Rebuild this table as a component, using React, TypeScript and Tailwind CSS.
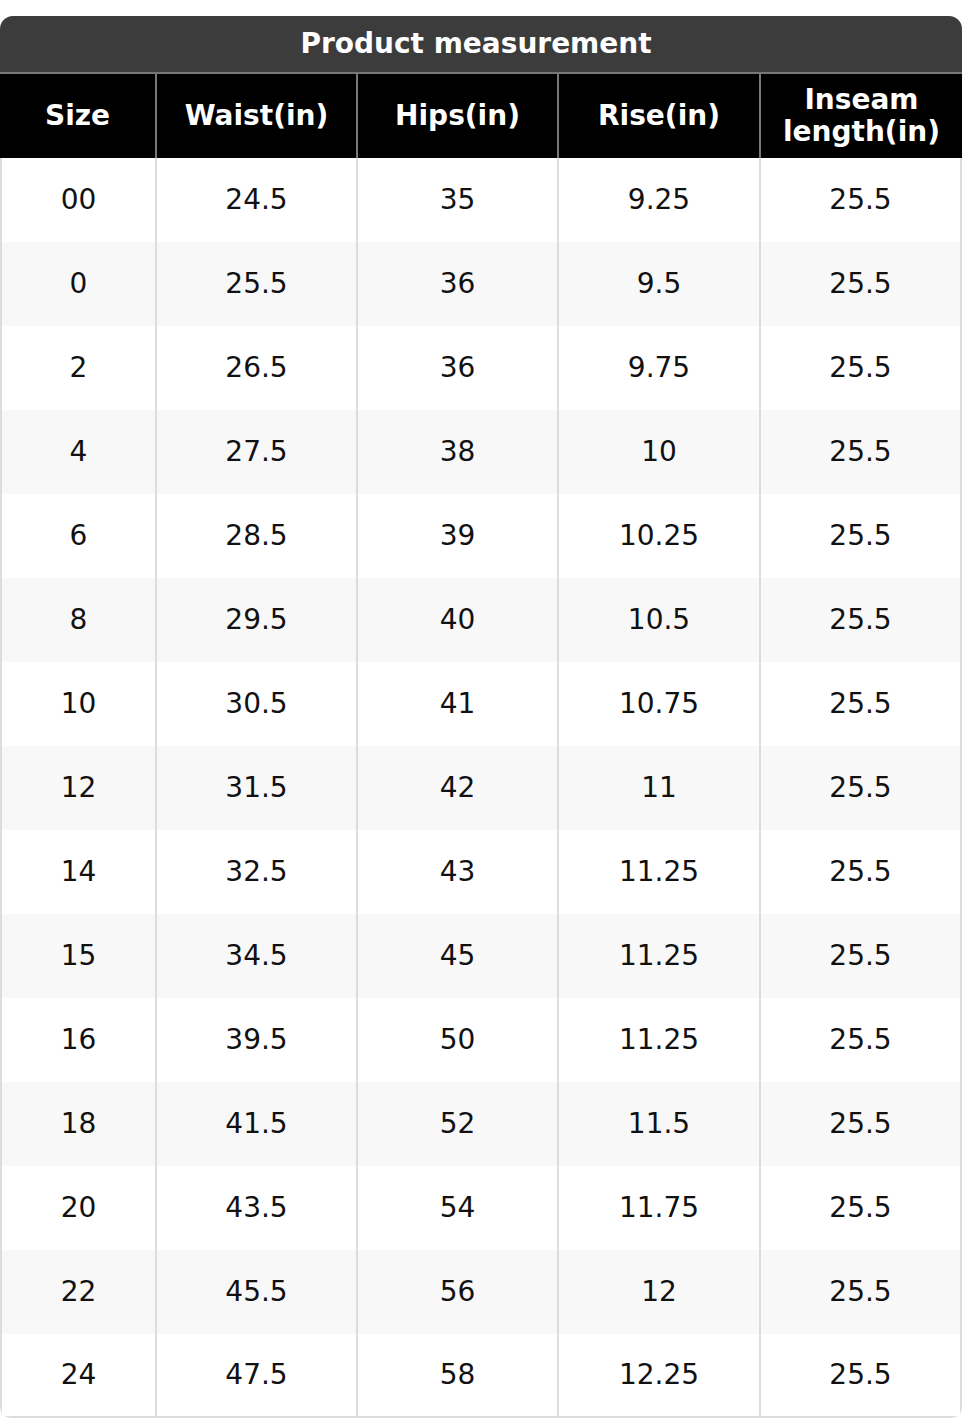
const columns = ["Size", "Waist(in)", "Hips(in)", "Rise(in)", "Inseam length(in)"];

const rows = [
  ["00", "24.5", "35", "9.25", "25.5"],
  ["0", "25.5", "36", "9.5", "25.5"],
  ["2", "26.5", "36", "9.75", "25.5"],
  ["4", "27.5", "38", "10", "25.5"],
  ["6", "28.5", "39", "10.25", "25.5"],
  ["8", "29.5", "40", "10.5", "25.5"],
  ["10", "30.5", "41", "10.75", "25.5"],
  ["12", "31.5", "42", "11", "25.5"],
  ["14", "32.5", "43", "11.25", "25.5"],
  ["15", "34.5", "45", "11.25", "25.5"],
  ["16", "39.5", "50", "11.25", "25.5"],
  ["18", "41.5", "52", "11.5", "25.5"],
  ["20", "43.5", "54", "11.75", "25.5"],
  ["22", "45.5", "56", "12", "25.5"],
  ["24", "47.5", "58", "12.25", "25.5"],
];

const App = () => {
  return (
    <div className="w-[962px] bg-white pt-4 pb-[2px] font-['DejaVu_Sans',sans-serif] text-[28px] leading-[32px]">
      <div className="overflow-hidden rounded-t-[13px] rounded-b-[10px]">
        <div className="flex h-[58px] items-center justify-center border-b-2 border-[#777] bg-[#3c3c3c] pr-[10px] font-bold text-white">
          Product measurement
        </div>
        <div className="grid h-[84px] grid-cols-[155px_201px_201px_202px_1fr] bg-black font-bold text-white">
          {columns.map((c, i) => (
            <div
              key={c}
              className={`flex items-center justify-center px-2 text-center ${i > 0 ? "border-l-2 border-[#777]" : ""}`}
            >
              {c}
            </div>
          ))}
        </div>
        <div className="rounded-b-[10px] border-x-2 border-b-2 border-[#ddd]">
          {rows.map((r, ri) => (
            <div
              key={ri}
              className={`grid grid-cols-[153px_201px_201px_202px_1fr] ${ri === rows.length - 1 ? "h-[82px]" : "h-[84px]"} ${ri % 2 === 1 ? "bg-[#f8f8f8]" : "bg-white"}`}
            >
              {r.map((v, i) => (
                <div
                  key={i}
                  className={`flex items-center justify-center text-[#111] ${i > 0 ? "border-l-2 border-[#ddd]" : ""}`}
                >
                  {v}
                </div>
              ))}
            </div>
          ))}
        </div>
      </div>
    </div>
  );
};

export default App;
